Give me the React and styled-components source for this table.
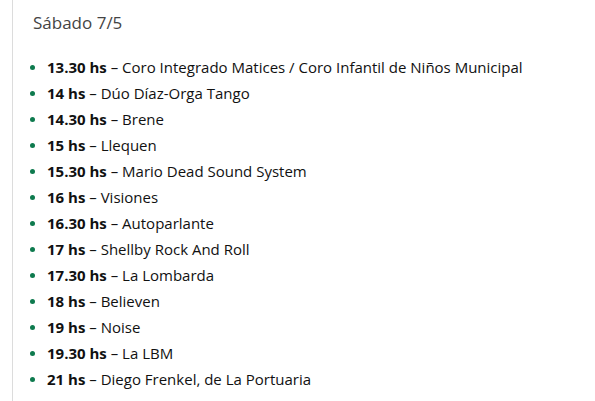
import React from 'react';
import styled, { createGlobalStyle } from 'styled-components';

const GlobalStyle = createGlobalStyle`
    body {
        margin: 0;
        background: #fff;
        font-family: 'Open Sans', 'Liberation Sans', sans-serif;
    }
`;

const schedule = [
    { time: '13.30 hs', name: 'Coro Integrado Matices / Coro Infantil de Niños Municipal' },
    { time: '14 hs', name: 'Dúo Díaz-Orga Tango' },
    { time: '14.30 hs', name: 'Brene' },
    { time: '15 hs', name: 'Llequen' },
    { time: '15.30 hs', name: 'Mario Dead Sound System' },
    { time: '16 hs', name: 'Visiones' },
    { time: '16.30 hs', name: 'Autoparlante' },
    { time: '17 hs', name: 'Shellby Rock And Roll' },
    { time: '17.30 hs', name: 'La Lombarda' },
    { time: '18 hs', name: 'Believen' },
    { time: '19 hs', name: 'Noise' },
    { time: '19.30 hs', name: 'La LBM' },
    { time: '21 hs', name: 'Diego Frenkel, de La Portuaria' },
];

const App = () => {
    return (
        <>
            <GlobalStyle />
            <DayBlock>
                <DayTitle>Sábado 7/5</DayTitle>
                <List>
                    {schedule.map((v, i) => (
                        <Item key={i}>
                            <strong>{v.time}</strong> – {v.name}
                        </Item>
                    ))}
                </List>
            </DayBlock>
        </>
    );
};

const DayBlock = styled.div`
    margin-left: 12px;
    border-left: 1px solid #dcdcdc;
    padding: 11px 0 0 20px;
    min-height: 401px;
    box-sizing: border-box;
`;

const DayTitle = styled.h3`
    margin: 0 0 19px;
    font-size: 17px;
    font-weight: 400;
    color: #444;
    line-height: 24px;
`;

const List = styled.ul`
    margin: 0;
    padding: 0;
    list-style: none;
`;

const Item = styled.li`
    position: relative;
    padding-left: 14px;
    font-size: 15px;
    line-height: 26px;
    color: #111;
    strong {
        font-weight: 700;
    }
    &::before {
        content: '';
        position: absolute;
        left: -3px;
        top: 11px;
        width: 5px;
        height: 5px;
        border-radius: 50%;
        background: #0e7a4e;
    }
`;

export default App;
